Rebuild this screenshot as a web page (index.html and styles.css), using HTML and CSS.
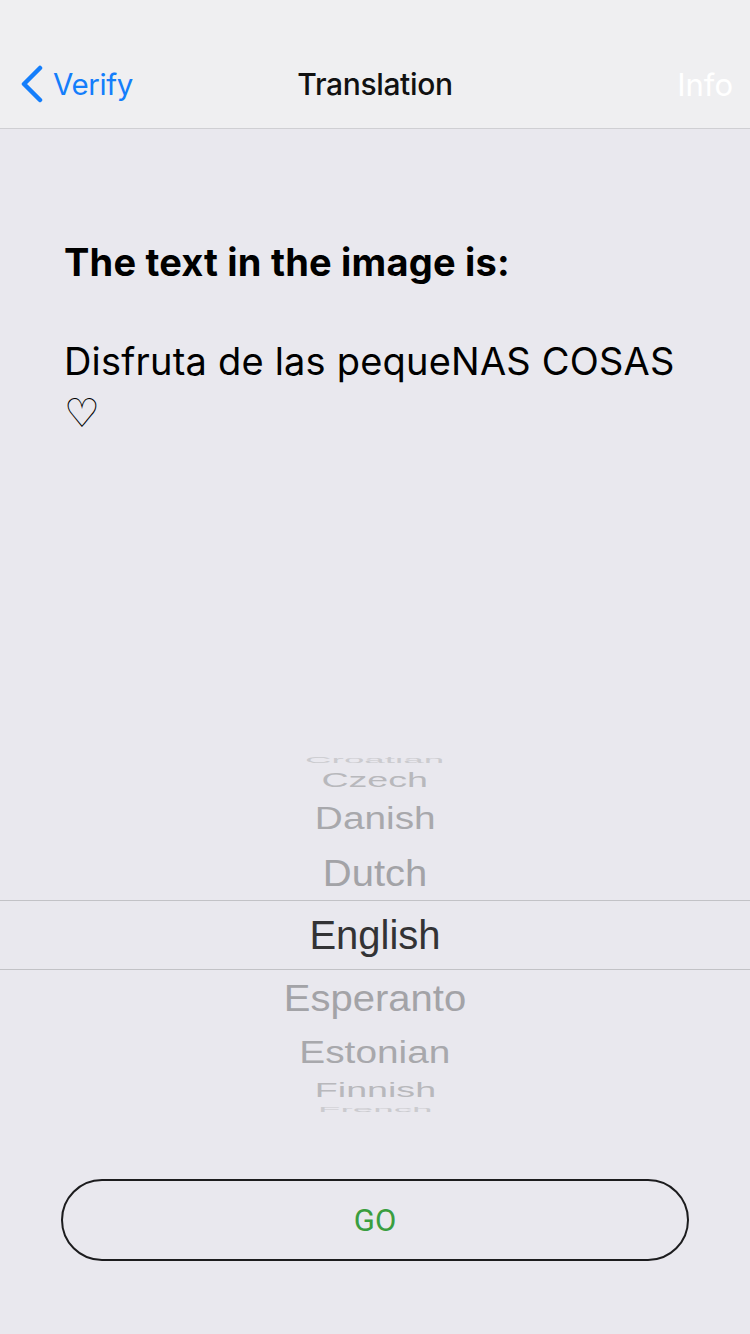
FILE: index.html
```html
<!DOCTYPE html>
<html>
<head>
<meta charset="utf-8">
<link rel="stylesheet" href="styles.css">
</head>
<body>
<div class="page">
  <header class="nav">
    <a class="back">
      <svg class="chev" width="26" height="38" viewBox="0 0 26 38"><path d="M22 3 L6 19 L22 35" fill="none" stroke="#147efb" stroke-width="4.5" stroke-linecap="round" stroke-linejoin="round"/></svg>
      <span>Verify</span>
    </a>
    <div class="title">Translation</div>
    <a class="info">Info</a>
  </header>
  <section class="content">
    <h1 class="heading">The text in the image is:</h1>
    <p class="result">Disfruta de las pequeNAS COSAS <span class="heart">♡</span></p>
  </section>
  <div class="picker">
    <div class="row r-croatian"><span>Croatian</span></div>
    <div class="row r-czech"><span>Czech</span></div>
    <div class="row r-danish"><span>Danish</span></div>
    <div class="row r-dutch"><span>Dutch</span></div>
    <div class="row r-sel"><span>English</span></div>
    <div class="row r-esperanto"><span>Esperanto</span></div>
    <div class="row r-estonian"><span>Estonian</span></div>
    <div class="row r-finnish"><span>Finnish</span></div>
    <div class="row r-french"><span>French</span></div>
  </div>
  <div class="actions">
    <button class="go">GO</button>
  </div>
</div>
</body>
</html>
```
FILE: styles.css
```css
html, body {
  margin: 0;
  padding: 0;
}
body {
  width: 750px;
  height: 1334px;
  background: #e9e8ee;
  font-family: Inter, "Noto Sans", sans-serif;
  overflow: hidden;
}
.page {
  display: flex;
  flex-direction: column;
  height: 1334px;
}
.nav {
  background: #efeff1;
  border-bottom: 1px solid #cfcfd3;
  display: flex;
  align-items: center;
  padding-top: 40px;
  box-sizing: border-box;
  height: 129px;
  position: relative;
}
.back {
  display: flex;
  align-items: center;
  gap: 9px;
  margin-left: 18px;
  color: #147efb;
  font-size: 29.5px;
  letter-spacing: -0.4px;
}
.chev {
  display: block;
}
.title {
  position: absolute;
  left: 0;
  right: 0;
  top: 40px;
  bottom: 0;
  display: flex;
  align-items: center;
  justify-content: center;
  font-size: 30px;
  font-weight: 500;
  color: #111;
  letter-spacing: -0.35px;
  pointer-events: none;
}
.info {
  margin-left: auto;
  margin-right: 17px;
  color: #ffffff;
  font-size: 31px;
}
.content {
  padding: 110px 64px 0;
}
.heading {
  margin: 0;
  font-size: 38px;
  line-height: 46px;
  font-weight: 700;
  color: #000;
  letter-spacing: 0.2px;
}
.result {
  margin: 50px 0 0;
  font-size: 38px;
  line-height: 52px;
  font-weight: 400;
  color: #000;
  letter-spacing: 0.2px;
}
.heart {
  font-family: "DejaVu Sans", sans-serif;
  font-weight: 200;
  font-size: 40px;
}
.picker {
  margin-top: auto;
  height: 355px;
  overflow: hidden;
  display: flex;
  flex-direction: column;
  font-family: "Liberation Sans", Arial, sans-serif;
  font-size: 40px;
  color: #a3a3a7;
}
.row {
  display: flex;
  align-items: center;
  justify-content: center;
  overflow: visible;
  flex: none;
}
.row span {
  display: block;
  line-height: 46px;
  white-space: nowrap;
}
.r-croatian { height: 11px; }
.r-croatian span { transform: translateY(-3px) scale(0.92, 0.22); color: #cbcbcf; }
.r-czech { height: 23px; }
.r-czech span { transform: scale(0.94, 0.52); color: #b8b8bc; }
.r-danish { height: 54px; }
.r-danish span { transform: scale(0.97, 0.78); color: #a8a8ac; }
.r-dutch { height: 55px; }
.r-dutch span { transform: scale(1, 0.94); }
.r-sel {
  height: 68px;
  border-top: 1px solid #c2c2c6;
  border-bottom: 1px solid #c2c2c6;
  color: #333335;
}
.r-esperanto { height: 56px; }
.r-esperanto span { transform: scale(1, 0.94); }
.r-estonian { height: 52px; }
.r-estonian span { transform: scale(0.97, 0.78); color: #a8a8ac; }
.r-finnish { height: 24px; }
.r-finnish span { transform: scale(0.94, 0.5); color: #b8b8bc; }
.r-french { height: 10px; }
.r-french span { transform: translateY(2px) scale(0.92, 0.2); color: #cbcbcf; }
.actions {
  padding: 67px 61px 73px;
}
.go {
  display: block;
  width: 628px;
  height: 82px;
  box-sizing: border-box;
  border: 2px solid #1c1c1e;
  border-radius: 41px;
  background: transparent;
  color: #3a9e3f;
  font-family: Roboto, sans-serif;
  font-size: 31px;
  padding: 0;
}
```
